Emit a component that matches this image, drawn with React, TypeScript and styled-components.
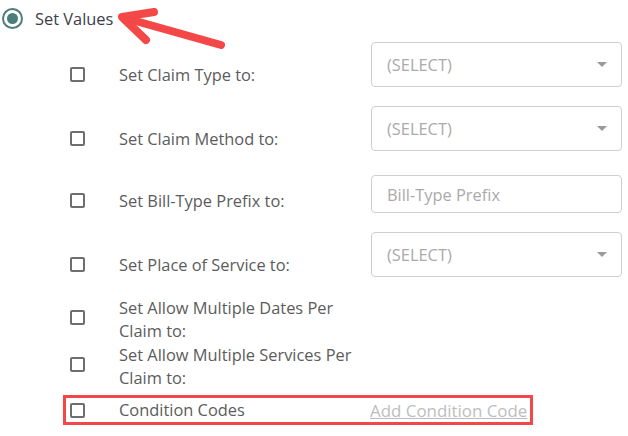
import React from 'react';
import styled, { createGlobalStyle } from 'styled-components';

const GlobalStyle = createGlobalStyle`
  body {
    margin: 0;
    background: #fff;
    font-family: 'Open Sans', 'Liberation Sans', sans-serif;
  }
`;

type RowDef = {
  label: string;
  control?: 'select' | 'input';
  placeholder?: string;
  gap: number;
};

const rows: RowDef[] = [
  { label: 'Set Claim Type to:', control: 'select', gap: 0 },
  { label: 'Set Claim Method to:', control: 'select', gap: 19 },
  { label: 'Set Bill-Type Prefix to:', control: 'input', placeholder: 'Bill-Type Prefix', gap: 24 },
  { label: 'Set Place of Service to:', control: 'select', gap: 19 },
  { label: 'Set Allow Multiple Dates Per Claim to:', gap: 19 },
  { label: 'Set Allow Multiple Services Per Claim to:', gap: 0 },
];

function App() {
  return (
    <Page>
      <GlobalStyle />
      <Header>
        <Radio />
        <HeaderLabel>Set Values</HeaderLabel>
      </Header>

      <List>
        {rows.map((row) => (
          <Row key={row.label} $gap={row.gap} $hasControl={!!row.control}>
            <Checkbox />
            <Label>{row.label}</Label>
            {row.control === 'select' && (
              <Select>
                <span>(SELECT)</span>
                <Caret />
              </Select>
            )}
            {row.control === 'input' && <TextInput placeholder={row.placeholder} />}
          </Row>
        ))}

        <Highlight>
          <Row $gap={0} $hasControl={false}>
            <Checkbox />
            <Label>Condition Codes</Label>
            <AddLink href='#'>Add Condition Code</AddLink>
          </Row>
        </Highlight>
      </List>

      <Arrow width='628' height='60' viewBox='0 0 628 60'>
        <path d='M221 45 L125 18' />
        <path d='M154 12 L122 17 L146 40' />
      </Arrow>
    </Page>
  );
}

export default App;

const Page = styled.div`
  position: relative;
  width: 628px;
  height: 436px;
  overflow: hidden;
  color: #5a5a5a;
`;

const Header = styled.div`
  display: flex;
  align-items: center;
  height: 37px;
  padding-left: 2px;
`;

const Radio = styled.span`
  box-sizing: border-box;
  width: 21px;
  height: 21px;
  border: 2px solid #4b7d7a;
  border-radius: 50%;
  display: flex;
  align-items: center;
  justify-content: center;

  &::after {
    content: '';
    width: 11px;
    height: 11px;
    border-radius: 50%;
    background: #4b7d7a;
  }
`;

const HeaderLabel = styled.span`
  margin-left: 12px;
  font-size: 16.4px;
  color: #3c4049;
`;

const List = styled.div`
  display: flex;
  flex-direction: column;
  padding: 5px 0 0 70px;
`;

const Row = styled.div<{ $gap: number; $hasControl: boolean }>`
  display: grid;
  grid-template-columns: 15px 286px 251px;
  align-items: ${(p) => (p.$hasControl ? 'end' : 'center')};
  margin-top: ${(p) => p.$gap}px;
`;

const Checkbox = styled.span`
  box-sizing: border-box;
  width: 15px;
  height: 15px;
  border: 2px solid #6e6e6e;
  border-radius: 2px;
  margin-bottom: 5px;
`;

const Label = styled.div`
  padding: 0 10px 1px 34px;
  font-size: 16.4px;
  line-height: 23px;
  color: #5c5c5c;
`;

const Select = styled.div`
  box-sizing: border-box;
  height: 45px;
  border: 1px solid #cfcfcf;
  border-radius: 4px;
  padding: 0 14px 0 15px;
  display: flex;
  align-items: center;
  justify-content: space-between;
  font-size: 16.4px;
  color: #aaaaaa;
  align-self: start;
`;

const Caret = styled.span`
  width: 0;
  height: 0;
  border-left: 5px solid transparent;
  border-right: 5px solid transparent;
  border-top: 5px solid #9a9a9a;
`;

const TextInput = styled.input`
  box-sizing: border-box;
  height: 38px;
  width: 251px;
  border: 1px solid #cfcfcf;
  border-radius: 4px;
  padding: 0 15px;
  font-family: 'Open Sans', 'Liberation Sans', sans-serif;
  font-size: 16.4px;
  outline: none;
  align-self: start;

  &::placeholder {
    color: #aaaaaa;
    opacity: 1;
  }
`;

const Highlight = styled.div`
  margin: 5px 0 0 -7px;
  width: 470px;
  box-sizing: border-box;
  height: 30px;
  border: 3px solid #f44848;
  padding-left: 4px;
  display: flex;
  align-items: center;

  & ${Checkbox} {
    margin-bottom: 0;
  }
`;

const AddLink = styled.a`
  margin-left: -1px;
  font-size: 16.9px;
  line-height: 23px;
  color: #bdbdbd;
  text-decoration: underline;
  white-space: nowrap;
`;

const Arrow = styled.svg`
  position: absolute;
  top: 0;
  left: 0;
  pointer-events: none;

  path {
    fill: none;
    stroke: #f44848;
    stroke-width: 8;
    stroke-linecap: round;
    stroke-linejoin: round;
  }
`;
